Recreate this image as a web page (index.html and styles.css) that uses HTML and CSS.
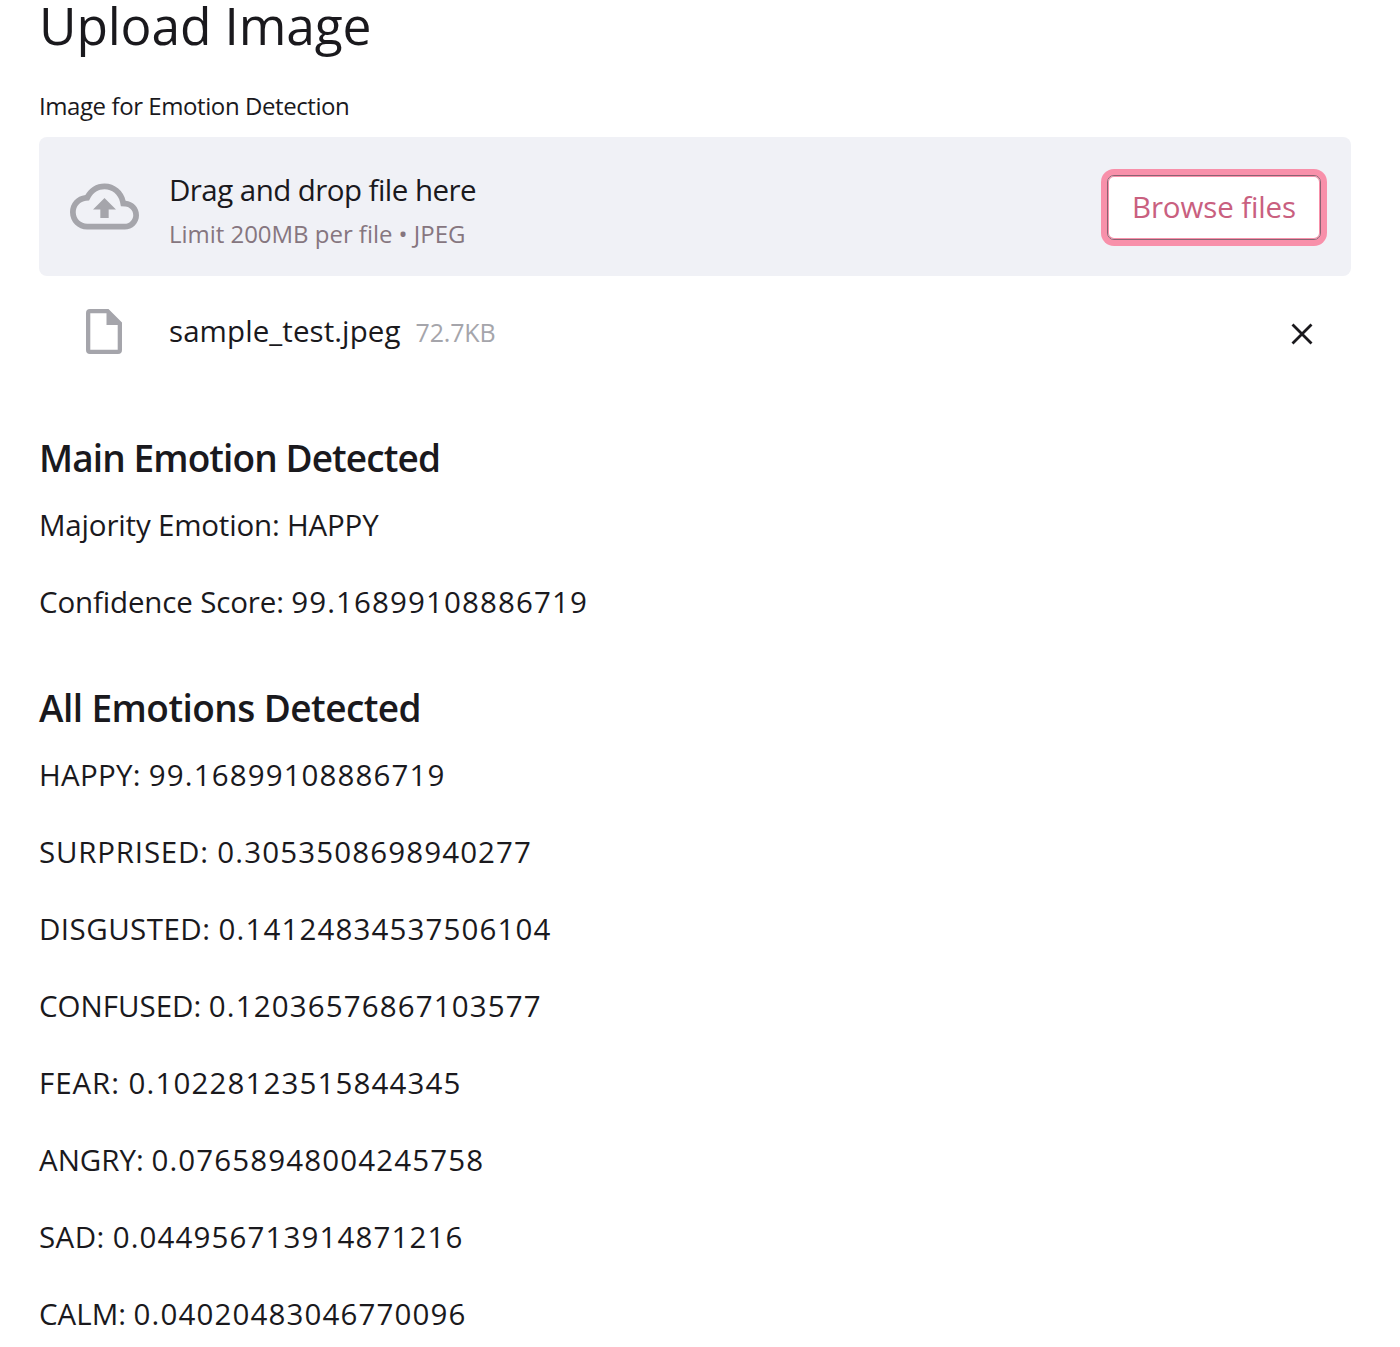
FILE: index.html
```html
<!DOCTYPE html>
<html lang="en">
<head>
<meta charset="utf-8">
<title>Emotion Detection</title>
<link rel="stylesheet" href="styles.css">
</head>
<body>
<main class="page">
  <h1 class="title">Upload Image</h1>
  <div class="label">Image for Emotion Detection</div>
  <section class="dropzone">
    <svg class="cloud" viewBox="0 0 24 24"><path d="M19.35 10.04C18.67 6.59 15.64 4 12 4 9.11 4 6.6 5.64 5.35 8.04 2.34 8.36 0 10.91 0 14c0 3.31 2.69 6 6 6h13c2.76 0 5-2.24 5-5 0-2.64-2.05-4.78-4.65-4.96zM19 18H6c-2.21 0-4-1.79-4-4 0-2.05 1.53-3.76 3.56-3.97l1.07-.11.5-.95C8.08 7.14 9.94 6 12 6c2.62 0 4.88 1.86 5.39 4.43l.3 1.5 1.53.11c1.56.1 2.78 1.41 2.78 2.96 0 1.65-1.35 3-3 3zM8 13h2.55v3h2.9v-3H16l-4-4z"/></svg>
    <div class="instructions">
      <div class="prompt">Drag and drop file here</div>
      <div class="limit">Limit 200MB per file • JPEG</div>
    </div>
    <button class="browse">Browse files</button>
  </section>
  <div class="file">
    <svg class="doc" viewBox="0 0 36 45"><path fill-rule="evenodd" d="M4 0H22.5L36 13.5V41a4 4 0 0 1-4 4H4a4 4 0 0 1-4-4V4a4 4 0 0 1 4-4zM4.3 4.3V40.7H31.7V16H20.5V4.3z"/></svg>
    <span class="name">sample_test.jpeg</span>
    <span class="size">72.7KB</span>
    <svg class="close" viewBox="0 0 22 22"><path d="M1.5 1.5L20.5 20.5M20.5 1.5L1.5 20.5"/></svg>
  </div>
  <h2 class="heading main-heading">Main Emotion Detected</h2>
  <p class="majority">Majority Emotion: HAPPY</p>
  <p class="confidence">Confidence Score: <span class="num">99.16899108886719</span></p>
  <h2 class="heading all-heading">All Emotions Detected</h2>
  <p class="happy">HAPPY: <span class="num">99.16899108886719</span></p>
  <p class="surprised">SURPRISED: <span class="num">0.3053508698940277</span></p>
  <p class="disgusted">DISGUSTED: <span class="num">0.14124834537506104</span></p>
  <p>CONFUSED: <span class="num">0.12036576867103577</span></p>
  <p class="fear">FEAR: <span class="num">0.10228123515844345</span></p>
  <p>ANGRY: <span class="num">0.07658948004245758</span></p>
  <p class="sad">SAD: <span class="num">0.044956713914871216</span></p>
  <p>CALM: <span class="num">0.04020483046770096</span></p>
</main>
</body>
</html>
```

FILE: styles.css
```css
* { box-sizing: border-box; }
body { margin: 0; background: #fff; color: #1a191d; font-family: "Open Sans", "Noto Sans", sans-serif; }
.page { width: 1400px; padding: 0 49px 0 39px; }
.title { margin: 0 0 41px; font-size: 51.5px; line-height: 50px; font-weight: 400; letter-spacing: -0.15px; }
.label { font-size: 24px; line-height: 30px; margin-bottom: 16px; letter-spacing: -0.42px; }
.dropzone { display: flex; align-items: center; height: 139px; padding: 0 30px 0 31px; border-radius: 8px; background: #f0f1f6; }
.cloud { width: 69px; height: 69px; margin-bottom: 1px; fill: #a5a5ab; }
.instructions { margin-left: 30px; padding-top: 7px; flex: 1; }
.prompt { font-size: 29.5px; line-height: 46px; letter-spacing: -0.55px; }
.limit { font-size: 24px; line-height: 41px; color: #86767f; letter-spacing: -0.03px; }
.browse { width: 214px; height: 65px; margin-top: 1px; border: 1px solid #8a6372; border-radius: 7px; background: #fff; box-shadow: 0 0 0 6px #f890aa, inset 0 0 0 1px #f890aa; color: #c9607f; font: 29.5px "Open Sans", sans-serif; letter-spacing: -0.12px; padding: 0 0 2px; }
.file { display: flex; align-items: center; height: 111px; padding: 0 38px 0 47px; }
.doc { width: 36px; height: 45px; fill: #a5a5ab; margin-right: 47px; }
.name { font-size: 29.5px; line-height: 44px; padding-bottom: 2px; letter-spacing: 0.08px; }
.size { margin-left: 15px; padding-top: 1px; font-size: 25px; color: #a5a5ab; letter-spacing: -0.15px; }
.close { width: 22px; height: 22px; margin: 5px 0 0 auto; fill: none; stroke: #1a191d; stroke-width: 2.8; }
.heading { margin: 0 0 13px; font-size: 37px; line-height: 60px; font-weight: 600; }
.main-heading { margin-top: 41px; letter-spacing: -0.9px; }
.all-heading { margin-top: 53px; letter-spacing: -0.55px; }
p { margin: 0 0 30px; font-size: 29.5px; line-height: 47px; }
p:last-child { margin-bottom: 0; }
.num { letter-spacing: 1.13px; }
.majority { letter-spacing: -0.18px; }
.confidence { letter-spacing: -0.15px; }
.happy { letter-spacing: 0.28px; }
.surprised { letter-spacing: 0.8px; }
.disgusted { letter-spacing: 0.47px; }
.fear { letter-spacing: 0.95px; }
.sad { letter-spacing: 0.4px; }
```
